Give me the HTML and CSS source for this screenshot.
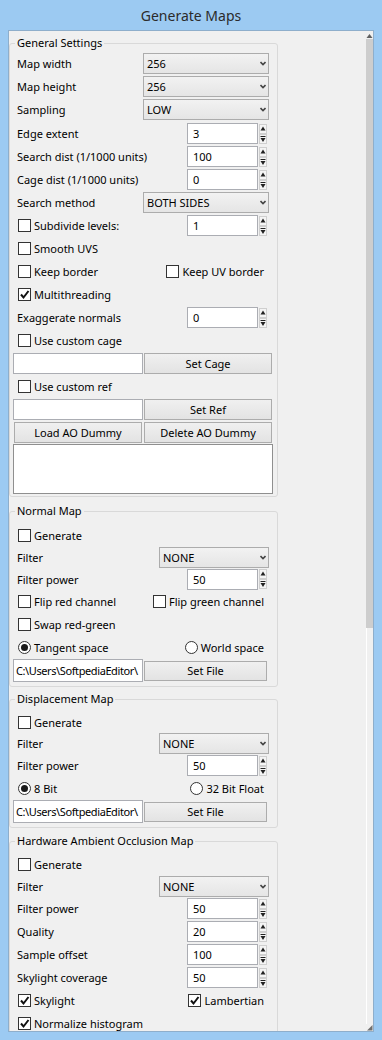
FILE: index.html
```html
<!DOCTYPE html>
<html lang="en">
<head>
  <meta charset="utf-8">
  <title>Generate Maps</title>
  <link rel="stylesheet" href="styles.css">
</head>
<body>
  <div class="window">
    <div class="titlebar">Generate Maps</div>
    <div class="client">
      <div class="panel">

        <fieldset class="group general">
          <legend>General Settings</legend>
          <div class="row"><span class="label">Map width</span>
            <div class="combo"><span>256</span><svg class="chev" width="6" height="5"><path d="M0.5 1 L3 3.5 L5.5 1" fill="none" stroke="#444" stroke-width="1.6"/></svg></div></div>
          <div class="row"><span class="label">Map height</span>
            <div class="combo"><span>256</span><svg class="chev" width="6" height="5"><path d="M0.5 1 L3 3.5 L5.5 1" fill="none" stroke="#444" stroke-width="1.6"/></svg></div></div>
          <div class="row gap-after"><span class="label">Sampling</span>
            <div class="combo"><span>LOW</span><svg class="chev" width="6" height="5"><path d="M0.5 1 L3 3.5 L5.5 1" fill="none" stroke="#444" stroke-width="1.6"/></svg></div></div>
          <div class="row"><span class="label">Edge extent</span>
            <div class="spin"><div class="field">3</div><svg width="8" height="20"><rect x="0.5" y="0.5" width="7" height="9" fill="#f4f4f4" stroke="#cfcfcf"/><rect x="0.5" y="10.5" width="7" height="9" fill="#f4f4f4" stroke="#cfcfcf"/><path d="M4 2.5 L6.5 6.5 H1.5 Z" fill="#222"/><path d="M1.5 12 H6.5 V13 H1.5 Z M1.5 14 H6.5 L4 18 Z" fill="#222"/></svg></div></div>
          <div class="row"><span class="label">Search dist (1/1000 units)</span>
            <div class="spin"><div class="field">100</div><svg width="8" height="20"><rect x="0.5" y="0.5" width="7" height="9" fill="#f4f4f4" stroke="#cfcfcf"/><rect x="0.5" y="10.5" width="7" height="9" fill="#f4f4f4" stroke="#cfcfcf"/><path d="M4 2.5 L6.5 6.5 H1.5 Z" fill="#222"/><path d="M1.5 12 H6.5 V13 H1.5 Z M1.5 14 H6.5 L4 18 Z" fill="#222"/></svg></div></div>
          <div class="row"><span class="label">Cage dist (1/1000 units)</span>
            <div class="spin"><div class="field">0</div><svg width="8" height="20"><rect x="0.5" y="0.5" width="7" height="9" fill="#f4f4f4" stroke="#cfcfcf"/><rect x="0.5" y="10.5" width="7" height="9" fill="#f4f4f4" stroke="#cfcfcf"/><path d="M4 2.5 L6.5 6.5 H1.5 Z" fill="#222"/><path d="M1.5 12 H6.5 V13 H1.5 Z M1.5 14 H6.5 L4 18 Z" fill="#222"/></svg></div></div>
          <div class="row"><span class="label">Search method</span>
            <div class="combo"><span>BOTH SIDES</span><svg class="chev" width="6" height="5"><path d="M0.5 1 L3 3.5 L5.5 1" fill="none" stroke="#444" stroke-width="1.6"/></svg></div></div>
          <div class="row"><label class="check"><span class="box"></span>Subdivide levels:</label>
            <div class="spin"><div class="field">1</div><svg width="8" height="20"><rect x="0.5" y="0.5" width="7" height="9" fill="#f4f4f4" stroke="#cfcfcf"/><rect x="0.5" y="10.5" width="7" height="9" fill="#f4f4f4" stroke="#cfcfcf"/><path d="M4 2.5 L6.5 6.5 H1.5 Z" fill="#222"/><path d="M1.5 12 H6.5 V13 H1.5 Z M1.5 14 H6.5 L4 18 Z" fill="#222"/></svg></div></div>
          <div class="row"><label class="check"><span class="box"></span>Smooth UVS</label></div>
          <div class="row">
            <label class="check"><span class="box"></span>Keep border</label>
            <label class="check right"><span class="box"></span>Keep UV border</label>
          </div>
          <div class="row"><label class="check"><span class="box"><svg width="11" height="11"><path d="M2 5.5 L4.5 8.5 L9.5 2" fill="none" stroke="#111" stroke-width="2"/></svg></span>Multithreading</label></div>
          <div class="row"><span class="label">Exaggerate normals</span>
            <div class="spin"><div class="field">0</div><svg width="8" height="20"><rect x="0.5" y="0.5" width="7" height="9" fill="#f4f4f4" stroke="#cfcfcf"/><rect x="0.5" y="10.5" width="7" height="9" fill="#f4f4f4" stroke="#cfcfcf"/><path d="M4 2.5 L6.5 6.5 H1.5 Z" fill="#222"/><path d="M1.5 12 H6.5 V13 H1.5 Z M1.5 14 H6.5 L4 18 Z" fill="#222"/></svg></div></div>
          <div class="row"><label class="check"><span class="box"></span>Use custom cage</label></div>
          <div class="row"><div class="path"></div><div class="btn">Set Cage</div></div>
          <div class="row"><label class="check"><span class="box"></span>Use custom ref</label></div>
          <div class="row"><div class="path"></div><div class="btn">Set Ref</div></div>
          <div class="row"><div class="btn first">Load AO Dummy</div><div class="btn">Delete AO Dummy</div></div>
          <div class="memo"></div>
        </fieldset>

        <fieldset class="group normal">
          <legend>Normal Map</legend>
          <div class="row h22"><label class="check"><span class="box"></span>Generate</label></div>
          <div class="row h22"><span class="label">Filter</span>
            <div class="combo narrow"><span>NONE</span><svg class="chev" width="6" height="5"><path d="M0.5 1 L3 3.5 L5.5 1" fill="none" stroke="#444" stroke-width="1.6"/></svg></div></div>
          <div class="row h22"><span class="label">Filter power</span>
            <div class="spin"><div class="field">50</div><svg width="8" height="20"><rect x="0.5" y="0.5" width="7" height="9" fill="#f4f4f4" stroke="#cfcfcf"/><rect x="0.5" y="10.5" width="7" height="9" fill="#f4f4f4" stroke="#cfcfcf"/><path d="M4 2.5 L6.5 6.5 H1.5 Z" fill="#222"/><path d="M1.5 12 H6.5 V13 H1.5 Z M1.5 14 H6.5 L4 18 Z" fill="#222"/></svg></div></div>
          <div class="row">
            <label class="check"><span class="box"></span>Flip red channel</label>
            <label class="check right"><span class="box"></span>Flip green channel</label>
          </div>
          <div class="row"><label class="check"><span class="box"></span>Swap red-green</label></div>
          <div class="row">
            <label class="check"><span class="box round on"></span>Tangent space</label>
            <label class="check right"><span class="box round"></span>World space</label>
          </div>
          <div class="row"><div class="path tall">C:\Users\SoftpediaEditor\</div><div class="btn file">Set File</div></div>
        </fieldset>

        <fieldset class="group displacement">
          <legend>Displacement Map</legend>
          <div class="row h21"><label class="check"><span class="box"></span>Generate</label></div>
          <div class="row h21"><span class="label">Filter</span>
            <div class="combo narrow"><span>NONE</span><svg class="chev" width="6" height="5"><path d="M0.5 1 L3 3.5 L5.5 1" fill="none" stroke="#444" stroke-width="1.6"/></svg></div></div>
          <div class="row"><span class="label">Filter power</span>
            <div class="spin"><div class="field">50</div><svg width="8" height="20"><rect x="0.5" y="0.5" width="7" height="9" fill="#f4f4f4" stroke="#cfcfcf"/><rect x="0.5" y="10.5" width="7" height="9" fill="#f4f4f4" stroke="#cfcfcf"/><path d="M4 2.5 L6.5 6.5 H1.5 Z" fill="#222"/><path d="M1.5 12 H6.5 V13 H1.5 Z M1.5 14 H6.5 L4 18 Z" fill="#222"/></svg></div></div>
          <div class="row">
            <label class="check"><span class="box round on"></span>8 Bit</label>
            <label class="check right"><span class="box round"></span>32 Bit Float</label>
          </div>
          <div class="row"><div class="path tall">C:\Users\SoftpediaEditor\</div><div class="btn file">Set File</div></div>
        </fieldset>

        <fieldset class="group occlusion">
          <legend>Hardware Ambient Occlusion Map</legend>
          <div class="row h21"><label class="check"><span class="box"></span>Generate</label></div>
          <div class="row h22"><span class="label">Filter</span>
            <div class="combo narrow"><span>NONE</span><svg class="chev" width="6" height="5"><path d="M0.5 1 L3 3.5 L5.5 1" fill="none" stroke="#444" stroke-width="1.6"/></svg></div></div>
          <div class="row"><span class="label">Filter power</span>
            <div class="spin"><div class="field">50</div><svg width="8" height="20"><rect x="0.5" y="0.5" width="7" height="9" fill="#f4f4f4" stroke="#cfcfcf"/><rect x="0.5" y="10.5" width="7" height="9" fill="#f4f4f4" stroke="#cfcfcf"/><path d="M4 2.5 L6.5 6.5 H1.5 Z" fill="#222"/><path d="M1.5 12 H6.5 V13 H1.5 Z M1.5 14 H6.5 L4 18 Z" fill="#222"/></svg></div></div>
          <div class="row"><span class="label">Quality</span>
            <div class="spin"><div class="field">20</div><svg width="8" height="20"><rect x="0.5" y="0.5" width="7" height="9" fill="#f4f4f4" stroke="#cfcfcf"/><rect x="0.5" y="10.5" width="7" height="9" fill="#f4f4f4" stroke="#cfcfcf"/><path d="M4 2.5 L6.5 6.5 H1.5 Z" fill="#222"/><path d="M1.5 12 H6.5 V13 H1.5 Z M1.5 14 H6.5 L4 18 Z" fill="#222"/></svg></div></div>
          <div class="row"><span class="label">Sample offset</span>
            <div class="spin"><div class="field">100</div><svg width="8" height="20"><rect x="0.5" y="0.5" width="7" height="9" fill="#f4f4f4" stroke="#cfcfcf"/><rect x="0.5" y="10.5" width="7" height="9" fill="#f4f4f4" stroke="#cfcfcf"/><path d="M4 2.5 L6.5 6.5 H1.5 Z" fill="#222"/><path d="M1.5 12 H6.5 V13 H1.5 Z M1.5 14 H6.5 L4 18 Z" fill="#222"/></svg></div></div>
          <div class="row"><span class="label">Skylight coverage</span>
            <div class="spin"><div class="field">50</div><svg width="8" height="20"><rect x="0.5" y="0.5" width="7" height="9" fill="#f4f4f4" stroke="#cfcfcf"/><rect x="0.5" y="10.5" width="7" height="9" fill="#f4f4f4" stroke="#cfcfcf"/><path d="M4 2.5 L6.5 6.5 H1.5 Z" fill="#222"/><path d="M1.5 12 H6.5 V13 H1.5 Z M1.5 14 H6.5 L4 18 Z" fill="#222"/></svg></div></div>
          <div class="row">
            <label class="check"><span class="box"><svg width="11" height="11"><path d="M2 5.5 L4.5 8.5 L9.5 2" fill="none" stroke="#111" stroke-width="2"/></svg></span>Skylight</label>
            <label class="check right"><span class="box"><svg width="11" height="11"><path d="M2 5.5 L4.5 8.5 L9.5 2" fill="none" stroke="#111" stroke-width="2"/></svg></span>Lambertian</label>
          </div>
          <div class="row"><label class="check"><span class="box"><svg width="11" height="11"><path d="M2 5.5 L4.5 8.5 L9.5 2" fill="none" stroke="#111" stroke-width="2"/></svg></span>Normalize histogram</label></div>
          <div class="row"></div>
        </fieldset>

      </div>

      <div class="scrollbar">
        <svg class="sb-arrow" width="7" height="8"><path d="M3.5 3 L6.5 7 H0.5 Z" fill="#606060"/></svg>
        <div class="sb-thumb"></div>
        <div class="sb-track"></div>
        <svg class="sb-grip" width="7" height="7"><path d="M6.5 1 V6.5 H1 Z" fill="#707070"/></svg>
      </div>
    </div>
  </div>
</body>
</html>
```

FILE: styles.css
```css
body {
  margin: 0;
  font-family: "Segoe UI", "Noto Sans", "Liberation Sans", sans-serif;
  font-size: 11px;
  color: #000;
}

.window {
  width: 382px;
  height: 1040px;
  background: #9ccaf2;
  display: flex;
  flex-direction: column;
}

.titlebar {
  height: 30px;
  display: flex;
  align-items: center;
  justify-content: center;
  font-size: 14px;
  color: #2b2b2b;
}

.client {
  margin: 0 8px 8px;
  height: 1002px;
  box-sizing: border-box;
  border: 1px solid #8eaecb;
  background: #f0f0f0;
  display: flex;
  overflow: hidden;
}

.panel {
  width: 269px;
  flex: none;
  padding-top: 4px;
}

/* group boxes */
.group {
  margin: 0;
  padding: 5px 4px 4px 3px;
  border: 1px solid #d9d9d9;
  border-radius: 3px;
  min-width: 0;
}

.group legend {
  padding: 0 2px;
  margin-left: 2px;
  line-height: 16px;
}

.general {
  padding-top: 1px;
  padding-bottom: 2px;
}

.normal {
  margin-top: 6px;
}

.displacement {
  margin-top: 4px;
}

.occlusion {
  margin-top: 5px;
}

.row {
  display: flex;
  align-items: center;
  height: 23px;
}

.row.h22 {
  height: 22px;
}

.row.h21 {
  height: 21px;
}

.row.gap-after {
  margin-bottom: 1px;
}

.label {
  margin-left: 4px;
  white-space: nowrap;
}

/* combo box */
.combo {
  margin-left: auto;
  margin-right: 4px;
  width: 126px;
  height: 21px;
  box-sizing: border-box;
  border: 1px solid #acacac;
  background: linear-gradient(#f2f2f2, #e5e5e5);
  display: flex;
  align-items: center;
  justify-content: space-between;
  padding: 0 2px 0 3px;
}

.combo.narrow {
  width: 110px;
}

.chev {
  display: block;
}

/* spin edit */
.spin {
  margin-left: auto;
  margin-right: 6px;
  display: flex;
  align-items: center;
  gap: 1px;
}

.spin svg {
  display: block;
}

.field {
  width: 71px;
  height: 21px;
  box-sizing: border-box;
  border: 1px solid #abadb3;
  background: #fff;
  padding-left: 5px;
  display: flex;
  align-items: center;
}

/* checkbox / radio */
.check {
  display: flex;
  align-items: center;
  margin-left: 5px;
  white-space: nowrap;
}

.check.right {
  margin-left: auto;
  margin-right: 9px;
}

.box {
  width: 13px;
  height: 13px;
  box-sizing: border-box;
  border: 1px solid #333;
  background: #fff;
  margin-right: 3px;
  display: flex;
  align-items: center;
  justify-content: center;
}

.box svg {
  display: block;
}

.box.round {
  border-radius: 50%;
}

.box.round.on::after {
  content: "";
  width: 7px;
  height: 7px;
  border-radius: 50%;
  background: #1a1a1a;
}

/* edits and buttons */
.path {
  width: 130px;
  height: 21px;
  box-sizing: border-box;
  border: 1px solid #abadb3;
  background: #fff;
  padding-left: 2px;
  overflow: hidden;
  white-space: nowrap;
  letter-spacing: -0.4px;
  display: flex;
  align-items: center;
  flex: none;
}

.path.tall {
  height: 23px;
}

.btn {
  width: 128px;
  height: 21px;
  box-sizing: border-box;
  border: 1px solid #acacac;
  background: linear-gradient(#f0f0f0, #e3e3e3);
  display: flex;
  align-items: center;
  justify-content: center;
  margin-left: 1px;
  flex: none;
}

.btn.first {
  margin-left: 1px;
  margin-right: 1px;
}

.btn.file {
  width: 123px;
  height: 20px;
}

.memo {
  width: 260px;
  height: 50px;
  box-sizing: border-box;
  border: 1px solid #8f8f8f;
  background: #fff;
}

/* scrollbar */
.scrollbar {
  margin-left: auto;
  width: 7px;
  display: flex;
  flex-direction: column;
}

.sb-arrow,
.sb-grip {
  display: block;
  flex: none;
}

.sb-thumb {
  height: 589px;
  background: #cdcdcd;
  flex: none;
}

.sb-track {
  flex: 1;
  border-left: 1px solid #fff;
}
```
